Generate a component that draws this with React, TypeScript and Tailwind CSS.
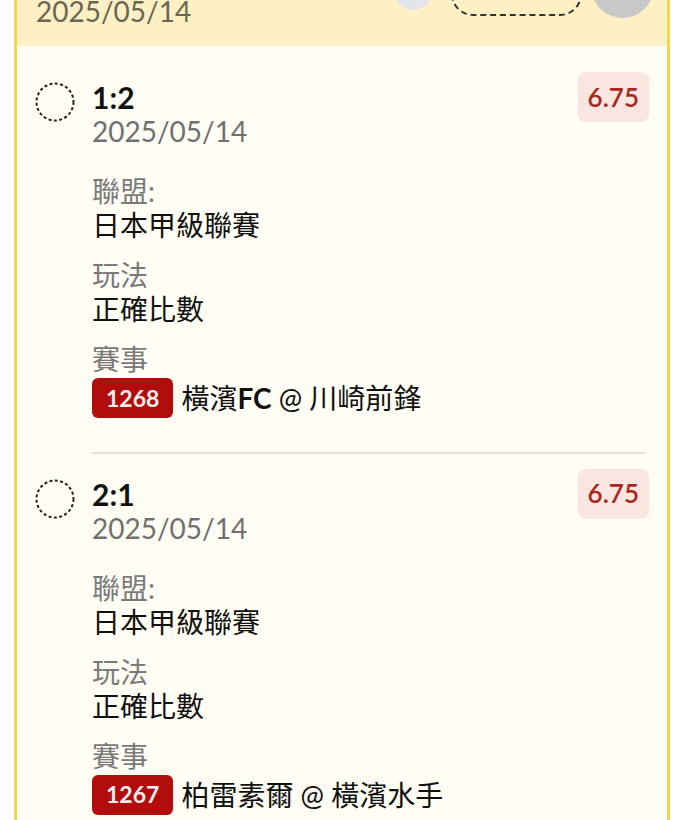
import React from "react";

type Bet = {
  score: string;
  date: string;
  odds: string;
  league: string;
  play: string;
  matchId: string;
  match: string;
};

const bets: Bet[] = [
  {
    score: "1:2",
    date: "2025/05/14",
    odds: "6.75",
    league: "日本甲級聯賽",
    play: "正確比數",
    matchId: "1268",
    match: "橫濱FC @ 川崎前鋒",
  },
  {
    score: "2:1",
    date: "2025/05/14",
    odds: "6.75",
    league: "日本甲級聯賽",
    play: "正確比數",
    matchId: "1267",
    match: "柏雷素爾 @ 橫濱水手",
  },
];

// latin team codes (FC etc.) show up heavier than the CJK text
const MatchName = ({ text }: { text: string }) => (
  <>
    {text.split(/([A-Z]+)/).map((part, i) =>
      /^[A-Z]+$/.test(part) ? (
        <span key={i} className="font-bold">
          {part}
        </span>
      ) : (
        <span key={i}>{part}</span>
      )
    )}
  </>
);

const DashedCircle = () => (
  <svg width="40" height="40" viewBox="0 0 40 40" className="shrink-0 mt-[10px]">
    <circle cx="20" cy="20" r="18.5" fill="none" stroke="#222" strokeWidth="2" strokeDasharray="3 2.4" />
  </svg>
);

const BetItem = ({ bet, last }: { bet: Bet; last: boolean }) => (
  <div>
    <div className="flex items-start pt-[15px] pb-[34px] pl-[18px] pr-[18px]">
      <DashedCircle />
      <div className="flex-1 ml-[17px] pt-[8px]">
        <div className="text-[30px] leading-[34px] font-bold text-[#111]">{bet.score}</div>
        <div className="text-[28px] leading-[34px] text-[#707070]">{bet.date}</div>

        <div className="mt-[26px] text-[28px] leading-[34px] text-[#7a7a7a]">聯盟:</div>
        <div className="text-[28px] leading-[34px] text-[#111]">{bet.league}</div>

        <div className="mt-[16px] text-[28px] leading-[34px] text-[#7a7a7a]">玩法</div>
        <div className="text-[28px] leading-[34px] text-[#111]">{bet.play}</div>

        <div className="mt-[16px] text-[28px] leading-[34px] text-[#7a7a7a]">賽事</div>
        <div className="flex items-center mt-[2px]">
          <span className="h-[40px] px-[14px] flex items-center rounded-[6px] bg-[#b10d0d] text-[#fdeeee] text-[23px] font-bold">
            {bet.matchId}
          </span>
          <span className="ml-[8px] text-[28px] leading-[34px] text-[#111]">
            <MatchName text={bet.match} />
          </span>
        </div>
      </div>
      <div className="h-[50px] px-[10px] flex items-center rounded-[8px] bg-[#f9e6e0] text-[26px] font-semibold text-[#a8281e]">
        {bet.odds}
      </div>
    </div>
    {!last && <div className="ml-[75px] mr-[22px] h-[1.5px] bg-[#e4e1d8]" />}
  </div>
);

export default function App() {
  return (
    <div className="w-[684px] h-[820px] overflow-hidden bg-white font-['Lato','Noto_Sans_CJK_TC',sans-serif]">
      <div className="mx-[14px] -mt-[60px] border-x-[3px] border-[#f3d54e] bg-[#fffdf4]">
        {/* header */}
        <div className="h-[106px] bg-[#fdf0c5] flex items-end justify-between pl-[19px] pr-[13px]">
          <div className="text-[28px] leading-[34px] text-[#6b6652] mb-[18px]">2025/05/14</div>
          <div className="flex items-end">
            <div className="w-[38px] h-[38px] rounded-full bg-[#e3e5ea] mb-[36px] flex justify-center">
              <div className="w-[16px] h-[16px] rounded-full bg-[#555] mt-[12px]" />
            </div>
            <div className="ml-[19px] w-[131px] h-[44px] rounded-[22px] border-2 border-dashed border-[#333] mb-[30px]" />
            <div className="ml-[9px] w-[63px] h-[63px] rounded-full bg-[#c8c8c8] mb-[28px]" />
          </div>
        </div>

        <div className="pt-[11px]">
          {bets.map((b, i) => (
            <BetItem key={b.matchId} bet={b} last={i === bets.length - 1} />
          ))}
        </div>
      </div>
    </div>
  );
}
